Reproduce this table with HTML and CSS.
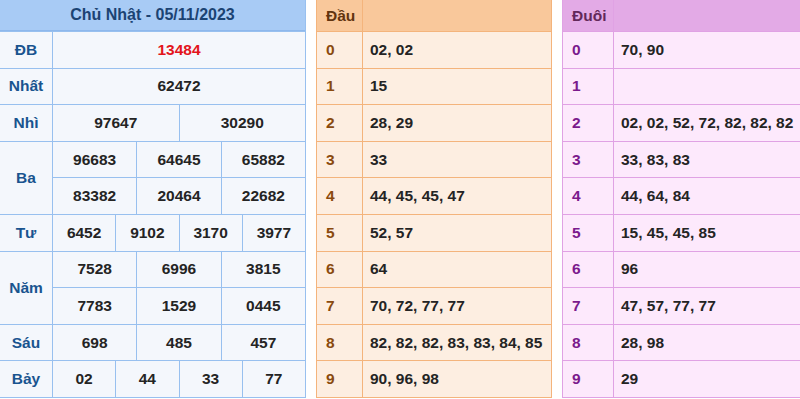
FILE: index.html
```html
<!DOCTYPE html>
<html lang="vi">
<head>
<meta charset="utf-8">
<link rel="stylesheet" href="styles.css">
</head>
<body>
<div class="page">
  <div class="kq">
    <div class="kq-head">Chủ Nhật - 05/11/2023</div>
    <div class="lbl">ĐB</div><div class="v s12 red">13484</div>
    <div class="lbl">Nhất</div><div class="v s12">62472</div>
    <div class="lbl">Nhì</div><div class="v s6">97647</div><div class="v s6">30290</div>
    <div class="lbl r2">Ba</div><div class="v s4">96683</div><div class="v s4">64645</div><div class="v s4">65882</div>
    <div class="v s4">83382</div><div class="v s4">20464</div><div class="v s4">22682</div>
    <div class="lbl">Tư</div><div class="v s3">6452</div><div class="v s3">9102</div><div class="v s3">3170</div><div class="v s3">3977</div>
    <div class="lbl r2">Năm</div><div class="v s4">7528</div><div class="v s4">6996</div><div class="v s4">3815</div>
    <div class="v s4">7783</div><div class="v s4">1529</div><div class="v s4">0445</div>
    <div class="lbl">Sáu</div><div class="v s4">698</div><div class="v s4">485</div><div class="v s4">457</div>
    <div class="lbl">Bảy</div><div class="v s3">02</div><div class="v s3">44</div><div class="v s3">33</div><div class="v s3">77</div>
  </div>

  <div class="lt dau">
    <div class="h">Đầu</div><div class="h"></div>
    <div class="k">0</div><div class="n">02, 02</div>
    <div class="k">1</div><div class="n">15</div>
    <div class="k">2</div><div class="n">28, 29</div>
    <div class="k">3</div><div class="n">33</div>
    <div class="k">4</div><div class="n">44, 45, 45, 47</div>
    <div class="k">5</div><div class="n">52, 57</div>
    <div class="k">6</div><div class="n">64</div>
    <div class="k">7</div><div class="n">70, 72, 77, 77</div>
    <div class="k">8</div><div class="n">82, 82, 82, 83, 83, 84, 85</div>
    <div class="k">9</div><div class="n">90, 96, 98</div>
  </div>

  <div class="lt duoi">
    <div class="h">Đuôi</div><div class="h"></div>
    <div class="k">0</div><div class="n">70, 90</div>
    <div class="k">1</div><div class="n"></div>
    <div class="k">2</div><div class="n">02, 02, 52, 72, 82, 82, 82</div>
    <div class="k">3</div><div class="n">33, 83, 83</div>
    <div class="k">4</div><div class="n">44, 64, 84</div>
    <div class="k">5</div><div class="n">15, 45, 45, 85</div>
    <div class="k">6</div><div class="n">96</div>
    <div class="k">7</div><div class="n">47, 57, 77, 77</div>
    <div class="k">8</div><div class="n">28, 98</div>
    <div class="k">9</div><div class="n">29</div>
  </div>
</div>
</body>
</html>
```

FILE: styles.css
```css
html, body {
  margin: 0;
  padding: 0;
  background: #ffffff;
  overflow: hidden;
}
body {
  font-family: "Liberation Sans", Arial, sans-serif;
  font-weight: bold;
  font-size: 15.5px;
}
.page {
  display: flex;
  align-items: flex-start;
  gap: 10px;
  width: 820px;
}
.kq {
  width: 305px;
  height: 397px;
  display: grid;
  grid-template-columns: 52px repeat(12, 1fr);
  grid-template-rows: 31px repeat(10, 1fr);
  gap: 1px;
  background: #98c0ef;
  border: 1px solid #98c0ef;
  border-left: 0;
  border-top: 0;
  flex: none;
}
.kq-head {
  grid-column: 1 / -1;
  background: #a8cbf5;
  color: #1b4373;
  font-size: 16px;
  display: flex;
  align-items: center;
  justify-content: center;
  border-bottom: 1px solid #8eb8ec;
}
.lbl {
  background: #f4f7fc;
  color: #19548f;
  display: flex;
  align-items: center;
  justify-content: center;
}
.r2 { grid-row: span 2; }
.v {
  background: #f4f7fc;
  color: #242424;
  display: flex;
  align-items: center;
  justify-content: center;
}
.s12 { grid-column: span 12; }
.s6 { grid-column: span 6; }
.s4 { grid-column: span 4; }
.s3 { grid-column: span 3; }
.red { color: #e3141b; }

.lt {
  height: 397px;
  display: grid;
  grid-template-rows: 31px repeat(10, 1fr);
  gap: 1px;
  flex: none;
}
.lt .h {
  display: flex;
  align-items: center;
  padding-left: 9px;
}
.lt .k, .lt .n {
  display: flex;
  align-items: center;
}
.lt .k { padding-left: 9px; }
.lt .n { padding-left: 7px; color: #242424; }

.dau {
  width: 234px;
  grid-template-columns: 45px 1fr;
  background: #f4b47c;
  border: 1px solid #f4b47c;
  border-top: 0;
}
.dau .h { background: #f9c89b; color: #62340f; }
.dau .k { background: #fdeee1; color: #8a4a0e; }
.dau .n { background: #fdeee1; }

.duoi {
  width: 250px;
  grid-template-columns: 50px 1fr;
  background: #e0a2e4;
  border: 1px solid #e0a2e4;
  border-top: 0;
  border-right: 0;
}
.duoi .h { background: #e3aae6; color: #62285a; }
.duoi .k { background: #fde9fc; color: #7b1a8c; }
.duoi .n { background: #fde9fc; }
```
